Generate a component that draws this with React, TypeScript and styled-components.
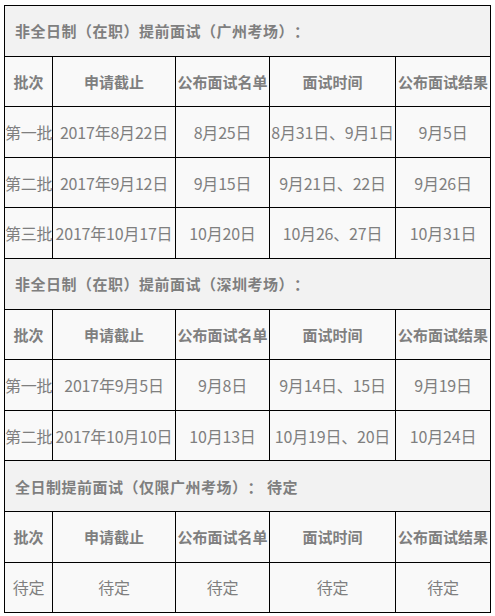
import { Fragment } from "react";
import styled, { createGlobalStyle } from "styled-components";

const GlobalStyle = createGlobalStyle`
  html, body {
    margin: 0;
    padding: 0;
    background: #ffffff;
  }
  body {
    font-family: "Noto Sans CJK SC", "Microsoft YaHei", sans-serif;
    text-spacing-trim: space-all;
  }
`;

const Page = styled.div`
  padding: 5px 0 0 4px;
`;

const Table = styled.table`
  width: 486px;
  border-collapse: collapse;
  table-layout: fixed;
  color: #7f7f7f;
`;

const Cell = styled.td<{ $head?: boolean }>`
  height: 49.6px;
  padding: 0;
  border: 1px solid #000;
  background: #f9f9f9;
  text-align: center;
  vertical-align: middle;
  white-space: nowrap;
  font-size: ${(p) => (p.$head ? "15px" : "16px")};
  font-weight: ${(p) => (p.$head ? 700 : 400)};
  letter-spacing: ${(p) => (p.$head ? "0" : "-0.2px")};
`;

const TitleCell = styled.td`
  height: 49.6px;
  padding: 0 0 0 10px;
  border: 1px solid #000;
  background: #f2f2f2;
  text-align: left;
  vertical-align: middle;
  font-size: 15px;
  font-weight: 700;
  letter-spacing: 0.5px;
  text-spacing-trim: space-all;
`;

const headers = ["批次", "申请截止", "公布面试名单", "面试时间", "公布面试结果"];

type Section = {
  title: string;
  rows: string[][];
};

const sections: Section[] = [
  {
    title: "非全日制（在职）提前面试（广州考场）：",
    rows: [
      ["第一批", "2017年8月22日", "8月25日", "8月31日、9月1日", "9月5日"],
      ["第二批", "2017年9月12日", "9月15日", "9月21日、22日", "9月26日"],
      ["第三批", "2017年10月17日", "10月20日", "10月26、27日", "10月31日"],
    ],
  },
  {
    title: "非全日制（在职）提前面试（深圳考场）：",
    rows: [
      ["第一批", "2017年9月5日", "9月8日", "9月14日、15日", "9月19日"],
      ["第二批", "2017年10月10日", "10月13日", "10月19日、20日", "10月24日"],
    ],
  },
  {
    title: "全日制提前面试（仅限广州考场）： 待定",
    rows: [["待定", "待定", "待定", "待定", "待定"]],
  },
];

const colWidths = [48, 123, 94, 126, 95];

export default function App() {
  return (
    <Page>
      <GlobalStyle />
      <Table>
        <colgroup>
          {colWidths.map((w, i) => (
            <col key={i} style={{ width: w }} />
          ))}
        </colgroup>
        <tbody>
          {sections.map((s, si) => (
            <Fragment key={si}>
              <tr>
                <TitleCell colSpan={5}>{s.title}</TitleCell>
              </tr>
              <tr>
                {headers.map((h) => (
                  <Cell $head key={h}>
                    {h}
                  </Cell>
                ))}
              </tr>
              {s.rows.map((r, ri) => (
                <tr key={ri}>
                  {r.map((c, ci) => (
                    <Cell key={ci}>{c}</Cell>
                  ))}
                </tr>
              ))}
            </Fragment>
          ))}
        </tbody>
      </Table>
    </Page>
  );
}
